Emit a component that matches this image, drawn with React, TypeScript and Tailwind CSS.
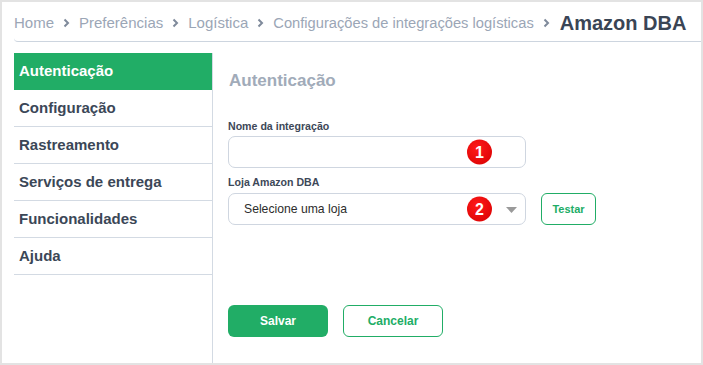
import React from "react";

const menu = [
  "Autenticação",
  "Configuração",
  "Rastreamento",
  "Serviços de entrega",
  "Funcionalidades",
  "Ajuda",
];

const crumbs = [
  "Home",
  "Preferências",
  "Logística",
  "Configurações de integrações logísticas",
];

function Chevron() {
  return (
    <svg width="7" height="10" viewBox="0 0 7 10" className="mx-[9px] shrink-0">
      <path d="M1.5 1.5 L5 5 L1.5 8.5" fill="none" stroke="#7f8a9b" strokeWidth="2" />
    </svg>
  );
}

function Badge({ n }: { n: number }) {
  return (
    <span className="absolute left-[238px] top-1/2 -translate-y-1/2 w-[25px] h-[25px] rounded-full bg-[radial-gradient(circle_at_40%_35%,#ff1a1a,#d60000)] text-white text-[16px] font-bold flex items-center justify-center leading-none">
      {n}
    </span>
  );
}

export default function App() {
  return (
    <div className="w-[703px] h-[365px] bg-[#e3e3e3] p-[2px] font-['Liberation_Sans',Arial,sans-serif]">
      <div className="w-full h-full bg-white flex flex-col">
        {/* Breadcrumb */}
        <div className="ml-[12px] h-[40px] pt-[3px] shrink-0 flex items-center border-b border-[#cdd5df] rounded-bl-[4px]">
          {crumbs.map((c, i) => (
            <React.Fragment key={c}>
              <span className={`${i === 3 ? "text-[14.7px]" : "text-[15px]"} text-[#9ba6b6]`}>{c}</span>
              <Chevron />
            </React.Fragment>
          ))}
          <span className="text-[20px] font-bold text-[#3a4555] ml-[1px]">Amazon DBA</span>
        </div>

        <div className="flex flex-1 mt-[11px] ml-[12px]">
          {/* Sidebar */}
          <div className="w-[199px] shrink-0 border-r border-[#d3dae3]">
            {menu.map((m, i) => (
              <div
                key={m}
                className={`h-[37px] flex items-center pl-[5px] pt-[1px] text-[15px] font-bold border-b ${
                  i === 0
                    ? "bg-[#21ad66] text-white border-[#21ad66]"
                    : "text-[#3b4757] border-[#d3dae3]"
                }`}
              >
                {m}
              </div>
            ))}
          </div>

          {/* Content */}
          <div className="flex-1 pl-[15px] pt-[15px]">
            <h2 className="text-[17px] font-bold text-[#a1abb9] pl-[1px]">Autenticação</h2>

            <div className="mt-[25px] text-[10.6px] font-bold text-[#3d4858]">Nome da integração</div>
            <div className="relative mt-[2px] w-[298px] h-[32px] rounded-[7px] border border-[#cfd6e0]">
              <Badge n={1} />
            </div>

            <div className="mt-[7px] text-[10.6px] font-bold text-[#3d4858]">Loja Amazon DBA</div>
            <div className="mt-[2px] flex items-center">
              <div className="relative w-[298px] h-[32px] rounded-[7px] border border-[#cfd6e0] flex items-center pl-[15px]">
                <span className="text-[12.2px] text-[#2c2c2c]">Selecione uma loja</span>
                <Badge n={2} />
                <svg width="11" height="6" viewBox="0 0 11 6" className="absolute right-[8px] top-[13px]">
                  <path d="M0 0 H11 L5.5 6 Z" fill="#9a9a9a" />
                </svg>
              </div>
              <button className="ml-[15px] w-[55px] h-[32px] rounded-[6px] border border-[#21ad66] text-[#21ad66] text-[11px] font-bold">
                Testar
              </button>
            </div>

            <div className="mt-[80px] flex gap-[15px]">
              <button className="w-[100px] h-[32px] rounded-[6px] bg-[#21ad66] text-white text-[12px] font-bold">
                Salvar
              </button>
              <button className="w-[100px] h-[32px] rounded-[6px] border border-[#21ad66] text-[#21ad66] text-[12px] font-bold">
                Cancelar
              </button>
            </div>
          </div>
        </div>
      </div>
    </div>
  );
}
